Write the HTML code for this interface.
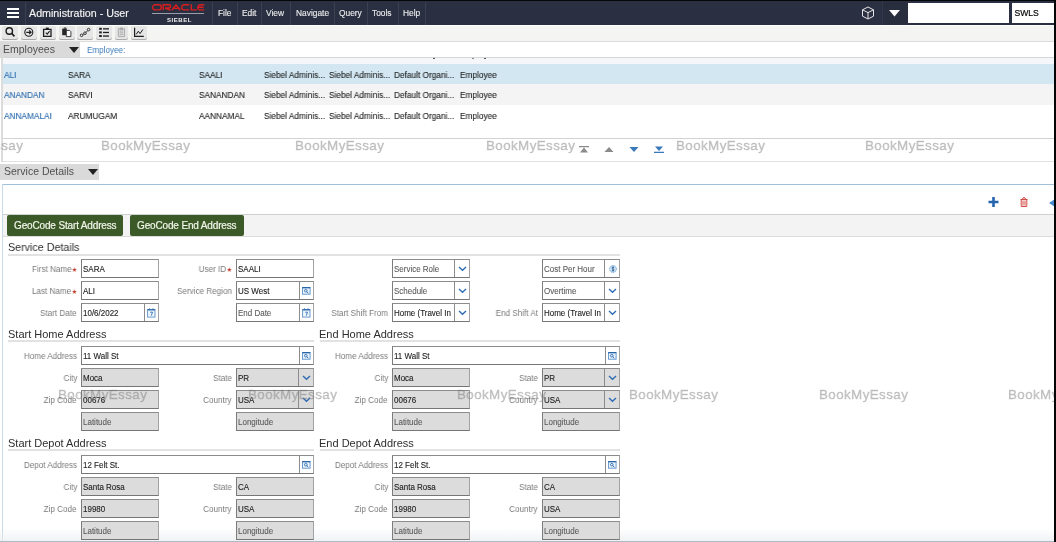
<!DOCTYPE html>
<html><head><meta charset="utf-8">
<style>
*{margin:0;padding:0;box-sizing:border-box}
html,body{width:1056px;height:542px;overflow:hidden;background:#fff;font-family:"Liberation Sans",sans-serif;position:relative}
.a{position:absolute}
body>*{will-change:transform}
.t{position:absolute;white-space:nowrap;line-height:1}
#hdr{left:0;top:0;width:1056px;height:25px;background:#2a3041;border-top:1px solid #050608}
.vs{position:absolute;top:1px;width:1px;height:24px;background:#3b4150}
.mn{position:absolute;top:8px;color:#ececee;-webkit-text-stroke:0.12px #ececee;font-size:8.4px;line-height:1}
.tb{position:absolute;top:26px;width:16px;height:13px;background:#e6e6e6;border-radius:2px;box-shadow:0 1px 0 #ababab}
.row{position:absolute;left:2.5px;width:1050.5px;height:21px}
.c{position:absolute;font-size:9px;line-height:1;white-space:nowrap;color:#262626;-webkit-text-stroke:0.12px currentColor;transform:scaleX(0.92);transform-origin:left top}
.lbl{position:absolute;font-size:9px;color:#7a7a7a;text-align:right;white-space:nowrap;line-height:1;transform:scaleX(0.9);transform-origin:right top}
.inp{position:absolute;height:19px;border:1px solid #7c7c7c;border-top-color:#8c8c8c;border-right-color:#a2a2a2;border-bottom-color:#767676;background:#fff}
.inp.ro{background:#dcdcdc}
.v{position:absolute;left:1px;top:4.6px;font-size:8.9px;color:#1c1c1c;-webkit-text-stroke:0.12px #1c1c1c;white-space:nowrap;line-height:1;transform:scaleX(0.9);transform-origin:left top}
.ph{color:#585858;-webkit-text-stroke:0.1px #666}
.ib{position:absolute;right:0;top:0;width:14px;height:17px;border-left:1px solid #8c8c8c}
.sec{position:absolute;font-size:11px;color:#2e2e2e;line-height:1;white-space:nowrap;transform-origin:left top}
.sl{position:absolute;height:2px;background:#e2e2e2}
.wm{position:absolute;font-size:13.4px;color:rgba(120,120,120,0.4);-webkit-text-stroke:0.35px rgba(120,120,120,0.4);white-space:nowrap;line-height:1;letter-spacing:0.4px}
.star{color:#c0392b;font-size:8px}
</style></head><body>

<!-- HEADER -->
<div id="hdr" class="a">
  <!-- hamburger -->
  <div class="a" style="left:7px;top:7px;width:12px;height:2px;background:#fff"></div>
  <div class="a" style="left:7px;top:11px;width:12px;height:2px;background:#fff"></div>
  <div class="a" style="left:7px;top:15px;width:12px;height:2px;background:#fff"></div>
  <div class="vs" style="left:25px"></div>
  <div class="t" style="left:29px;top:7px;font-size:10.7px;color:#f4f4f4;-webkit-text-stroke:0.15px #f4f4f4">Administration - User</div>
  <!-- oracle logo -->
  <svg class="a" style="left:151.5px;top:2.6px" width="53" height="7" viewBox="0 0 53 7"><g fill="none" stroke="#d81e1e" stroke-width="1.4">
<path d="M3 0.7 H7 A2.3 2.3 0 0 1 9.3 3 V3.6 A2.3 2.3 0 0 1 7 5.9 H3 A2.3 2.3 0 0 1 0.7 3.6 V3 A2.3 2.3 0 0 1 3 0.7 Z"/>
<path d="M11.2 6.3 V0.7 H17 A1.6 1.6 0 0 1 17 4 H13 L18.6 6.3"/>
<path d="M19.8 6.2 L24 0.9 L28.3 6.2 M22 4.4 H26"/>
<path d="M37.2 0.7 H32.2 A2.5 2.5 0 0 0 29.7 3.2 V3.4 A2.5 2.5 0 0 0 32.2 5.9 H37.2"/>
<path d="M39.3 0.2 V5.9 H44.8"/>
<path d="M52.3 0.7 H48.3 A2.5 2.5 0 0 0 45.8 3.2 V3.4 A2.5 2.5 0 0 0 48.3 5.9 H52.3 M46.4 3.3 H51.5"/>
</g></svg>
  <div class="a" style="left:152px;top:12px;width:52px;height:1px;background:#9a9eaa"></div>
  <div class="t" style="left:167px;top:15.6px;font-size:6px;color:#f0f0f0;font-weight:bold;letter-spacing:0.55px">SIEBEL</div>
  <div class="vs" style="left:212px"></div>
  <div class="mn" style="left:218px">File</div>
  <div class="vs" style="left:237px"></div>
  <div class="mn" style="left:242px">Edit</div>
  <div class="vs" style="left:261px"></div>
  <div class="mn" style="left:266px">View</div>
  <div class="vs" style="left:290px"></div>
  <div class="mn" style="left:296px">Navigate</div>
  <div class="vs" style="left:334px"></div>
  <div class="mn" style="left:339px">Query</div>
  <div class="vs" style="left:367px"></div>
  <div class="mn" style="left:372px">Tools</div>
  <div class="vs" style="left:398px"></div>
  <div class="mn" style="left:403px">Help</div>
  <div class="vs" style="left:425px"></div>
  <!-- cube -->
  <svg class="a" style="left:861px;top:5px" width="14" height="14" viewBox="0 0 14 14"><g fill="none" stroke="#e6e6e6" stroke-width="1"><path d="M7 1 L12.5 3.8 L12.5 10.2 L7 13 L1.5 10.2 L1.5 3.8 Z"/><path d="M1.5 3.8 L7 6.6 L12.5 3.8 M7 6.6 L7 13"/></g></svg>
  <div class="a" style="left:882px;top:0;width:26px;height:24px;background:#282e3e;border-left:1px solid #323849"></div>
  <svg class="a" style="left:889px;top:9px" width="11" height="7" viewBox="0 0 11 7"><path d="M0 0 L11 0 L5.5 6.5 Z" fill="#fff"/></svg>
  <div class="a" style="left:908px;top:2px;width:101px;height:19.5px;background:#fff"></div>
  <div class="a" style="left:1011.5px;top:2px;width:43px;height:19.5px;background:#fff"></div>
  <div class="t" style="left:1014.5px;top:8.3px;font-size:8.6px;color:#0a0a0a;-webkit-text-stroke:0.2px #0a0a0a">SWLS</div>
</div>

<!-- TOOLBAR -->
<div class="a" style="left:0;top:25px;width:1056px;height:16px;background:#f4f4f2;border-top:1px solid #fff"></div>
<div class="tb" style="left:2px"></div>
<div class="tb" style="left:21px"></div>
<div class="tb" style="left:40px"></div>
<div class="tb" style="left:59px"></div>
<div class="tb" style="left:77px"></div>
<div class="tb" style="left:96px"></div>
<div class="tb" style="left:115px;width:13px"></div>
<div class="tb" style="left:131px"></div>
<svg class="a" style="left:0;top:25px" width="150" height="16" viewBox="0 25 150 16">
 <g fill="none" stroke="#1e1e1e" stroke-width="1.5">
  <circle cx="9.3" cy="31" r="3.2" stroke-width="1.4"/>
  <path d="M11.6 33.3 L14.4 36.4" stroke-width="1.7"/>
  <circle cx="28.8" cy="32.3" r="4" stroke-width="1.1"/>
  <path d="M26.3 32.3 H31 M29.2 30.4 L31.1 32.3 L29.2 34.2" stroke-width="1.2"/>
  <path d="M43.6 29.4 H51 V36.3 H43.6 Z" stroke-width="1.3"/>
  <path d="M45.8 32.7 L47.2 34.1 L49.6 31.2" stroke-width="1.1"/>
 </g>
 <rect x="45.8" y="27.6" width="3" height="2" fill="#1e1e1e"/>
 <rect x="62.2" y="28.6" width="4.6" height="6.6" fill="#262626"/>
 <rect x="63.8" y="27.4" width="2.6" height="1.6" fill="#555"/>
 <path d="M66.3 30.4 H69.6 L70.9 31.7 V36.6 H66.3 Z" fill="#fafafa" stroke="#2a2a2a" stroke-width="0.9"/>
 <g fill="none" stroke="#262626" stroke-width="0.9">
  <circle cx="81.6" cy="35.3" r="1.3"/><circle cx="85" cy="33.2" r="1.3"/><circle cx="88.6" cy="29.6" r="1.3"/>
  <path d="M82.7 34.6 L83.9 33.9 M86.1 32.4 L87.6 30.6"/>
 </g>
 <g fill="#1e1e1e">
  <rect x="99.2" y="27.8" width="2.6" height="2"/><rect x="103" y="28.2" width="6" height="1.3"/>
  <rect x="99.2" y="31.4" width="2.6" height="2"/><rect x="103" y="31.8" width="6" height="1.3"/>
  <rect x="99.2" y="35" width="2.6" height="2"/><rect x="103" y="35.4" width="6" height="1.3"/>
 </g>
 <g fill="none" stroke="#9a9a9a" stroke-width="0.8">
  <path d="M118.3 28.8 H124.6 V36.6 H118.3 Z"/><path d="M120.2 28 H122.7 V29.3 H120.2Z"/>
  <path d="M119.5 31 H123.4 M119.5 32.8 H123.4 M119.5 34.6 H123.4"/>
 </g>
 <g fill="none" stroke="#1e1e1e">
  <path d="M134.6 27.8 V36.4 H143.8" stroke-width="1.2"/>
  <path d="M136.2 34.4 L138.3 31.2 L140 33.6 L142.9 29.5" stroke-width="1"/>
 </g>
</svg>

<!-- Employees tab -->
<div class="a" style="left:0;top:41px;width:1056px;height:1px;background:#dcdcdc"></div>
<div class="a" style="left:0;top:42px;width:80px;height:16px;background:#dadada"></div>
<div class="t" style="left:3px;top:44px;font-size:10.5px;color:#505050">Employees</div>
<svg class="a" style="left:69px;top:46.5px" width="10" height="7" viewBox="0 0 10 7"><path d="M0 0 L10 0 L5 6 Z" fill="#222"/></svg>
<div class="t" style="left:86.5px;top:45.6px;font-size:9px;color:#3c7bb9;transform:scaleX(0.9);transform-origin:left top">Employee:</div>

<!-- LIST -->
<div class="a" style="left:1px;top:57px;width:1.5px;height:105px;background:#dcdcdc"></div>
<div class="a" style="left:3px;top:57px;width:1051px;height:1px;background:#d6d6d6"></div>
<div class="a" style="left:3px;top:58px;width:1051px;height:6px;background:#f5f6f9"></div>
<div class="a" style="left:433px;top:58px;width:2px;height:1px;background:#555"></div>
<div class="a" style="left:472px;top:58px;width:2px;height:1px;background:#888"></div>
<div class="a" style="left:484px;top:58px;width:2px;height:1px;background:#555"></div>
<div class="row" style="top:64px;height:20px;background:#d2e7f2"></div>
<div class="row" style="top:84px;background:#f4f4f4"></div>
<div class="row" style="top:105px;background:#fff"></div>

<div class="t c" style="left:3.8px;top:70.8px;color:#2d6cae">ALI</div>
<div class="t c" style="left:68px;top:70.8px">SARA</div>
<div class="t c" style="left:199px;top:70.8px">SAALI</div>
<div class="t c" style="left:264px;top:70.8px">Siebel Adminis...</div>
<div class="t c" style="left:329px;top:70.8px">Siebel Adminis...</div>
<div class="t c" style="left:394px;top:70.8px">Default Organi...</div>
<div class="t c" style="left:460px;top:70.8px">Employee</div>

<div class="t c" style="left:3.8px;top:91.3px;color:#2d6cae">ANANDAN</div>
<div class="t c" style="left:68px;top:91.3px">SARVI</div>
<div class="t c" style="left:199px;top:91.3px">SANANDAN</div>
<div class="t c" style="left:264px;top:91.3px">Siebel Adminis...</div>
<div class="t c" style="left:329px;top:91.3px">Siebel Adminis...</div>
<div class="t c" style="left:394px;top:91.3px">Default Organi...</div>
<div class="t c" style="left:460px;top:91.3px">Employee</div>

<div class="t c" style="left:3.8px;top:111.9px;color:#2d6cae">ANNAMALAI</div>
<div class="t c" style="left:68px;top:111.9px">ARUMUGAM</div>
<div class="t c" style="left:199px;top:111.9px">AANNAMAL</div>
<div class="t c" style="left:264px;top:111.9px">Siebel Adminis...</div>
<div class="t c" style="left:329px;top:111.9px">Siebel Adminis...</div>
<div class="t c" style="left:394px;top:111.9px">Default Organi...</div>
<div class="t c" style="left:460px;top:111.9px">Employee</div>

<!-- pager -->
<div class="a" style="left:3px;top:138px;width:1051px;height:1px;background:#d2d2d2"></div>
<div class="a" style="left:3px;top:161px;width:1051px;height:1px;background:#e2e2e2"></div>
<svg class="a" style="left:579px;top:146px" width="10" height="7" viewBox="0 0 10 7"><path d="M0 0H10V1.2H0Z M5 1.5 L9 6.5 H1Z" fill="#8a8a8a"/></svg>
<svg class="a" style="left:604px;top:146px" width="10" height="7" viewBox="0 0 10 7"><path d="M5 1 L9.5 6 H0.5Z" fill="#8a8a8a"/></svg>
<svg class="a" style="left:629px;top:146px" width="10" height="7" viewBox="0 0 10 7"><path d="M0.5 1 H9.5 L5 6Z" fill="#3a79ba"/></svg>
<svg class="a" style="left:654px;top:146px" width="10" height="7" viewBox="0 0 10 7"><path d="M1 0.5 H9 L5 5Z M0 5.8H10V7H0Z" fill="#3a79ba"/></svg>

<!-- Service details tab -->
<div class="a" style="left:0;top:164px;width:99px;height:16px;background:#dadada"></div>
<div class="t" style="left:4px;top:166px;font-size:10.5px;color:#505050">Service Details</div>
<svg class="a" style="left:88px;top:168.5px" width="10" height="7" viewBox="0 0 10 7"><path d="M0 0 L10 0 L5 6 Z" fill="#222"/></svg>

<!-- form applet -->
<div class="a" style="left:2px;top:184px;width:1052px;height:1px;background:#9fc1dc"></div>
<div class="a" style="left:2px;top:184px;width:1px;height:358px;background:#c8d9e8"></div>
<svg class="a" style="left:988px;top:197px" width="11" height="10" viewBox="0 0 11 10"><path d="M4.2 0H6.8V3.7H10.5V6.3H6.8V10H4.2V6.3H0.5V3.7H4.2Z" fill="#2565ad"/></svg>
<svg class="a" style="left:1020px;top:197px" width="8" height="10" viewBox="0 0 8 10"><g fill="none" stroke="#d04a45" stroke-width="1"><path d="M0.5 2.5H7.5"/><path d="M2.5 2.5 Q2.5 0.5 4 0.5 Q5.5 0.5 5.5 2.5"/><path d="M1.2 2.8V9.5H6.8V2.8 M3 3.5V8.5 M5 3.5V8.5"/></g></svg>
<svg class="a" style="left:1049px;top:199px" width="6" height="8" viewBox="0 0 6 8"><path d="M0 4 L6 0 V8Z" fill="#4a8ad0"/></svg>

<div class="a" style="left:3px;top:214px;width:1051px;height:1px;background:#d0d0d0"></div>
<div class="a" style="left:3px;top:215px;width:1051px;height:21px;background:#f3f3f3"></div>
<div class="a" style="left:3px;top:236px;width:1051px;height:1px;background:#dcdcdc"></div>
<div class="a" style="left:7px;top:215px;width:116px;height:21px;background:#3c5a27;border-radius:2px"></div>
<div class="t" style="left:14px;top:221px;font-size:10px;letter-spacing:-0.15px;color:#f2f6ec;-webkit-text-stroke:0.2px #f2f6ec">GeoCode Start Address</div>
<div class="a" style="left:130px;top:215px;width:114px;height:21px;background:#3c5a27;border-radius:2px"></div>
<div class="t" style="left:137px;top:221px;font-size:10px;letter-spacing:-0.15px;color:#f2f6ec;-webkit-text-stroke:0.2px #f2f6ec">GeoCode End Address</div>

<div class="a" style="left:0;top:528px;width:1056px;height:13px;background:linear-gradient(rgba(240,242,244,0),rgba(232,236,240,0.65))"></div>
<!-- FORM START -->
<div class="sec" style="left:8px;top:241.5px;transform:scaleX(0.975)">Service Details</div>
<div class="sl" style="left:8px;top:254px;width:612px"></div>
<div class="lbl" style="right:979px;top:265px">First Name<span class="star" style="font-size:6.6px;margin-left:0.3px;position:relative;top:-0.2px">&#9733;</span></div>
<div class="inp" style="left:81px;top:259px;width:78px"><div class="v">SARA</div></div>
<div class="lbl" style="right:824px;top:265px">User ID<span class="star" style="font-size:6.6px;margin-left:0.3px;position:relative;top:-0.2px">&#9733;</span></div>
<div class="inp" style="left:236px;top:259px;width:78px"><div class="v">SAALI</div></div>
<div class="inp" style="left:392px;top:259px;width:78px"><div class="ib" style="width:15px"><svg style="position:absolute;left:3px;top:5.5px" width="9" height="6" viewBox="0 0 9 6"><path d="M1 1 L4.5 4.3 L8 1" fill="none" stroke="#2e6db3" stroke-width="1.4"/></svg></div><div class="v ph">Service Role</div></div>
<div class="inp" style="left:542px;top:259px;width:78px"><div class="ib" style="width:15px"><svg style="position:absolute;left:3.5px;top:5px" width="8" height="8" viewBox="0 0 8 8"><circle cx="4" cy="4" r="3.4" fill="#cfe3f5" stroke="#5d97cf" stroke-width="0.9" stroke-dasharray="1.2 0.8"/><path d="M5.1 2.6 Q4 1.9 3.1 2.6 Q2.8 3.7 4 4 Q5.2 4.3 4.9 5.4 Q4 6.1 2.9 5.4 M4 1.4V6.6" fill="none" stroke="#2b5f96" stroke-width="0.8"/></svg></div><div class="v ph">Cost Per Hour</div></div>
<div class="lbl" style="right:979px;top:287px">Last Name<span class="star" style="font-size:6.6px;margin-left:0.3px;position:relative;top:-0.2px">&#9733;</span></div>
<div class="inp" style="left:81px;top:281px;width:78px"><div class="v">ALI</div></div>
<div class="lbl" style="right:824px;top:287px">Service Region</div>
<div class="inp" style="left:236px;top:281px;width:78px"><div class="ib"><svg style="position:absolute;left:2px;top:5px" width="9" height="8" viewBox="0 0 9 8"><rect x="0.5" y="0.8" width="7.6" height="6.4" fill="#eaf2fa" stroke="#5b93cb" stroke-width="0.9"/><path d="M0.2 0.6 H8.4" stroke="#2b65a6" stroke-width="1.2"/><circle cx="3.8" cy="3.7" r="1.3" fill="none" stroke="#2e6db3" stroke-width="0.9"/><path d="M4.8 4.7 L6.3 6.1" stroke="#2e6db3" stroke-width="1"/></svg></div><div class="v">US West</div></div>
<div class="inp" style="left:392px;top:281px;width:78px"><div class="ib" style="width:15px"><svg style="position:absolute;left:3px;top:5.5px" width="9" height="6" viewBox="0 0 9 6"><path d="M1 1 L4.5 4.3 L8 1" fill="none" stroke="#2e6db3" stroke-width="1.4"/></svg></div><div class="v ph">Schedule</div></div>
<div class="inp" style="left:542px;top:281px;width:78px"><div class="ib" style="width:15px"><svg style="position:absolute;left:3px;top:5.5px" width="9" height="6" viewBox="0 0 9 6"><path d="M1 1 L4.5 4.3 L8 1" fill="none" stroke="#2e6db3" stroke-width="1.4"/></svg></div><div class="v ph">Overtime</div></div>
<div class="lbl" style="right:979px;top:309px">Start Date</div>
<div class="inp" style="left:81px;top:303px;width:78px"><div class="ib"><svg style="position:absolute;left:2px;top:4px" width="9" height="10" viewBox="0 0 9 10"><rect x="0.6" y="1.5" width="7.4" height="7.6" fill="#eef5fb" stroke="#5b93cb" stroke-width="0.9"/><path d="M0.6 1.8 H8" stroke="#2b65a6" stroke-width="1.2"/><path d="M2.5 0.3V2.2 M6 0.3V2.2" stroke="#2e6db3" stroke-width="0.9"/><path d="M3.2 4.2 H5.5 L4.3 7.6" fill="none" stroke="#2e6db3" stroke-width="0.9"/></svg></div><div class="v">10/6/2022</div></div>
<div class="inp" style="left:236px;top:303px;width:78px"><div class="ib"><svg style="position:absolute;left:2px;top:4px" width="9" height="10" viewBox="0 0 9 10"><rect x="0.6" y="1.5" width="7.4" height="7.6" fill="#eef5fb" stroke="#5b93cb" stroke-width="0.9"/><path d="M0.6 1.8 H8" stroke="#2b65a6" stroke-width="1.2"/><path d="M2.5 0.3V2.2 M6 0.3V2.2" stroke="#2e6db3" stroke-width="0.9"/><path d="M3.2 4.2 H5.5 L4.3 7.6" fill="none" stroke="#2e6db3" stroke-width="0.9"/></svg></div><div class="v ph">End Date</div></div>
<div class="lbl" style="right:668px;top:309px">Start Shift From</div>
<div class="inp" style="left:392px;top:303px;width:78px"><div class="ib" style="width:15px"><svg style="position:absolute;left:3px;top:5.5px" width="9" height="6" viewBox="0 0 9 6"><path d="M1 1 L4.5 4.3 L8 1" fill="none" stroke="#2e6db3" stroke-width="1.4"/></svg></div><div class="v">Home (Travel In</div></div>
<div class="lbl" style="right:518px;top:309px">End Shift At</div>
<div class="inp" style="left:542px;top:303px;width:78px"><div class="ib" style="width:15px"><svg style="position:absolute;left:3px;top:5.5px" width="9" height="6" viewBox="0 0 9 6"><path d="M1 1 L4.5 4.3 L8 1" fill="none" stroke="#2e6db3" stroke-width="1.4"/></svg></div><div class="v">Home (Travel In</div></div>
<div class="sec" style="left:8px;top:328.5px">Start Home Address</div>
<div class="sl" style="left:8px;top:340px;width:306px"></div>
<div class="sec" style="left:319px;top:328.5px">End Home Address</div>
<div class="sl" style="left:320px;top:340px;width:300px"></div>
<div class="lbl" style="right:979px;top:352px">Home Address</div>
<div class="inp" style="left:81px;top:346px;width:233px"><div class="ib"><svg style="position:absolute;left:2px;top:5px" width="9" height="8" viewBox="0 0 9 8"><rect x="0.5" y="0.8" width="7.6" height="6.4" fill="#eaf2fa" stroke="#5b93cb" stroke-width="0.9"/><path d="M0.2 0.6 H8.4" stroke="#2b65a6" stroke-width="1.2"/><circle cx="3.8" cy="3.7" r="1.3" fill="none" stroke="#2e6db3" stroke-width="0.9"/><path d="M4.8 4.7 L6.3 6.1" stroke="#2e6db3" stroke-width="1"/></svg></div><div class="v">11 Wall St</div></div>
<div class="lbl" style="right:979px;top:374px">City</div>
<div class="inp ro" style="left:81px;top:368px;width:78px"><div class="v">Moca</div></div>
<div class="lbl" style="right:824px;top:374px">State</div>
<div class="inp ro" style="left:236px;top:368px;width:78px"><div class="ib" style="width:15px"><svg style="position:absolute;left:3px;top:5.5px" width="9" height="6" viewBox="0 0 9 6"><path d="M1 1 L4.5 4.3 L8 1" fill="none" stroke="#2e6db3" stroke-width="1.4"/></svg></div><div class="v">PR</div></div>
<div class="lbl" style="right:979px;top:396px">Zip Code</div>
<div class="inp ro" style="left:81px;top:390px;width:78px"><div class="v">00676</div></div>
<div class="lbl" style="right:824px;top:396px">Country</div>
<div class="inp ro" style="left:236px;top:390px;width:78px"><div class="ib" style="width:15px"><svg style="position:absolute;left:3px;top:5.5px" width="9" height="6" viewBox="0 0 9 6"><path d="M1 1 L4.5 4.3 L8 1" fill="none" stroke="#2e6db3" stroke-width="1.4"/></svg></div><div class="v">USA</div></div>
<div class="inp ro" style="left:81px;top:412px;width:78px"><div class="v ph">Latitude</div></div>
<div class="inp ro" style="left:236px;top:412px;width:78px"><div class="v ph">Longitude</div></div>
<div class="lbl" style="right:668px;top:352px">Home Address</div>
<div class="inp" style="left:392px;top:346px;width:228px"><div class="ib"><svg style="position:absolute;left:2px;top:5px" width="9" height="8" viewBox="0 0 9 8"><rect x="0.5" y="0.8" width="7.6" height="6.4" fill="#eaf2fa" stroke="#5b93cb" stroke-width="0.9"/><path d="M0.2 0.6 H8.4" stroke="#2b65a6" stroke-width="1.2"/><circle cx="3.8" cy="3.7" r="1.3" fill="none" stroke="#2e6db3" stroke-width="0.9"/><path d="M4.8 4.7 L6.3 6.1" stroke="#2e6db3" stroke-width="1"/></svg></div><div class="v">11 Wall St</div></div>
<div class="lbl" style="right:668px;top:374px">City</div>
<div class="inp ro" style="left:392px;top:368px;width:78px"><div class="v">Moca</div></div>
<div class="lbl" style="right:518px;top:374px">State</div>
<div class="inp ro" style="left:542px;top:368px;width:78px"><div class="ib" style="width:15px"><svg style="position:absolute;left:3px;top:5.5px" width="9" height="6" viewBox="0 0 9 6"><path d="M1 1 L4.5 4.3 L8 1" fill="none" stroke="#2e6db3" stroke-width="1.4"/></svg></div><div class="v">PR</div></div>
<div class="lbl" style="right:668px;top:396px">Zip Code</div>
<div class="inp ro" style="left:392px;top:390px;width:78px"><div class="v">00676</div></div>
<div class="lbl" style="right:518px;top:396px">Country</div>
<div class="inp ro" style="left:542px;top:390px;width:78px"><div class="ib" style="width:15px"><svg style="position:absolute;left:3px;top:5.5px" width="9" height="6" viewBox="0 0 9 6"><path d="M1 1 L4.5 4.3 L8 1" fill="none" stroke="#2e6db3" stroke-width="1.4"/></svg></div><div class="v">USA</div></div>
<div class="inp ro" style="left:392px;top:412px;width:78px"><div class="v ph">Latitude</div></div>
<div class="inp ro" style="left:542px;top:412px;width:78px"><div class="v ph">Longitude</div></div>
<div class="sec" style="left:8px;top:437.5px">Start Depot Address</div>
<div class="sl" style="left:8px;top:449px;width:306px"></div>
<div class="sec" style="left:319px;top:437.5px">End Depot Address</div>
<div class="sl" style="left:320px;top:449px;width:300px"></div>
<div class="lbl" style="right:979px;top:461px">Depot Address</div>
<div class="inp" style="left:81px;top:455px;width:233px"><div class="ib"><svg style="position:absolute;left:2px;top:5px" width="9" height="8" viewBox="0 0 9 8"><rect x="0.5" y="0.8" width="7.6" height="6.4" fill="#eaf2fa" stroke="#5b93cb" stroke-width="0.9"/><path d="M0.2 0.6 H8.4" stroke="#2b65a6" stroke-width="1.2"/><circle cx="3.8" cy="3.7" r="1.3" fill="none" stroke="#2e6db3" stroke-width="0.9"/><path d="M4.8 4.7 L6.3 6.1" stroke="#2e6db3" stroke-width="1"/></svg></div><div class="v">12 Felt St.</div></div>
<div class="lbl" style="right:979px;top:483px">City</div>
<div class="inp ro" style="left:81px;top:477px;width:78px"><div class="v">Santa Rosa</div></div>
<div class="lbl" style="right:824px;top:483px">State</div>
<div class="inp ro" style="left:236px;top:477px;width:78px"><div class="v">CA</div></div>
<div class="lbl" style="right:979px;top:505px">Zip Code</div>
<div class="inp ro" style="left:81px;top:499px;width:78px"><div class="v">19980</div></div>
<div class="lbl" style="right:824px;top:505px">Country</div>
<div class="inp ro" style="left:236px;top:499px;width:78px"><div class="v">USA</div></div>
<div class="inp ro" style="left:81px;top:521px;width:78px"><div class="v ph">Latitude</div></div>
<div class="inp ro" style="left:236px;top:521px;width:78px"><div class="v ph">Longitude</div></div>
<div class="lbl" style="right:668px;top:461px">Depot Address</div>
<div class="inp" style="left:392px;top:455px;width:228px"><div class="ib"><svg style="position:absolute;left:2px;top:5px" width="9" height="8" viewBox="0 0 9 8"><rect x="0.5" y="0.8" width="7.6" height="6.4" fill="#eaf2fa" stroke="#5b93cb" stroke-width="0.9"/><path d="M0.2 0.6 H8.4" stroke="#2b65a6" stroke-width="1.2"/><circle cx="3.8" cy="3.7" r="1.3" fill="none" stroke="#2e6db3" stroke-width="0.9"/><path d="M4.8 4.7 L6.3 6.1" stroke="#2e6db3" stroke-width="1"/></svg></div><div class="v">12 Felt St.</div></div>
<div class="lbl" style="right:668px;top:483px">City</div>
<div class="inp ro" style="left:392px;top:477px;width:78px"><div class="v">Santa Rosa</div></div>
<div class="lbl" style="right:518px;top:483px">State</div>
<div class="inp ro" style="left:542px;top:477px;width:78px"><div class="v">CA</div></div>
<div class="lbl" style="right:668px;top:505px">Zip Code</div>
<div class="inp ro" style="left:392px;top:499px;width:78px"><div class="v">19980</div></div>
<div class="lbl" style="right:518px;top:505px">Country</div>
<div class="inp ro" style="left:542px;top:499px;width:78px"><div class="v">USA</div></div>
<div class="inp ro" style="left:392px;top:521px;width:78px"><div class="v ph">Latitude</div></div>
<div class="inp ro" style="left:542px;top:521px;width:78px"><div class="v ph">Longitude</div></div>
<!-- FORM END -->
<!-- WM START -->
<div class="wm" style="left:-66px;top:139px">BookMyEssay</div>
<div class="wm" style="left:101px;top:139px">BookMyEssay</div>
<div class="wm" style="left:295px;top:139px">BookMyEssay</div>
<div class="wm" style="left:486px;top:139px">BookMyEssay</div>
<div class="wm" style="left:676px;top:139px">BookMyEssay</div>
<div class="wm" style="left:865px;top:139px">BookMyEssay</div>
<div class="wm" style="left:58px;top:388px">BookMyEssay</div>
<div class="wm" style="left:248px;top:388px">BookMyEssay</div>
<div class="wm" style="left:457px;top:388px">BookMyEssay</div>
<div class="wm" style="left:629px;top:388px">BookMyEssay</div>
<div class="wm" style="left:819px;top:388px">BookMyEssay</div>
<div class="wm" style="left:1008px;top:388px">BookMyEssay</div>
<div class="a" style="left:0;top:541px;width:1056px;height:1px;background:#aebbc6"></div>
<div class="a" style="left:1054px;top:0;width:2px;height:542px;background:#050505"></div>
<!-- WM END -->
</body></html>
